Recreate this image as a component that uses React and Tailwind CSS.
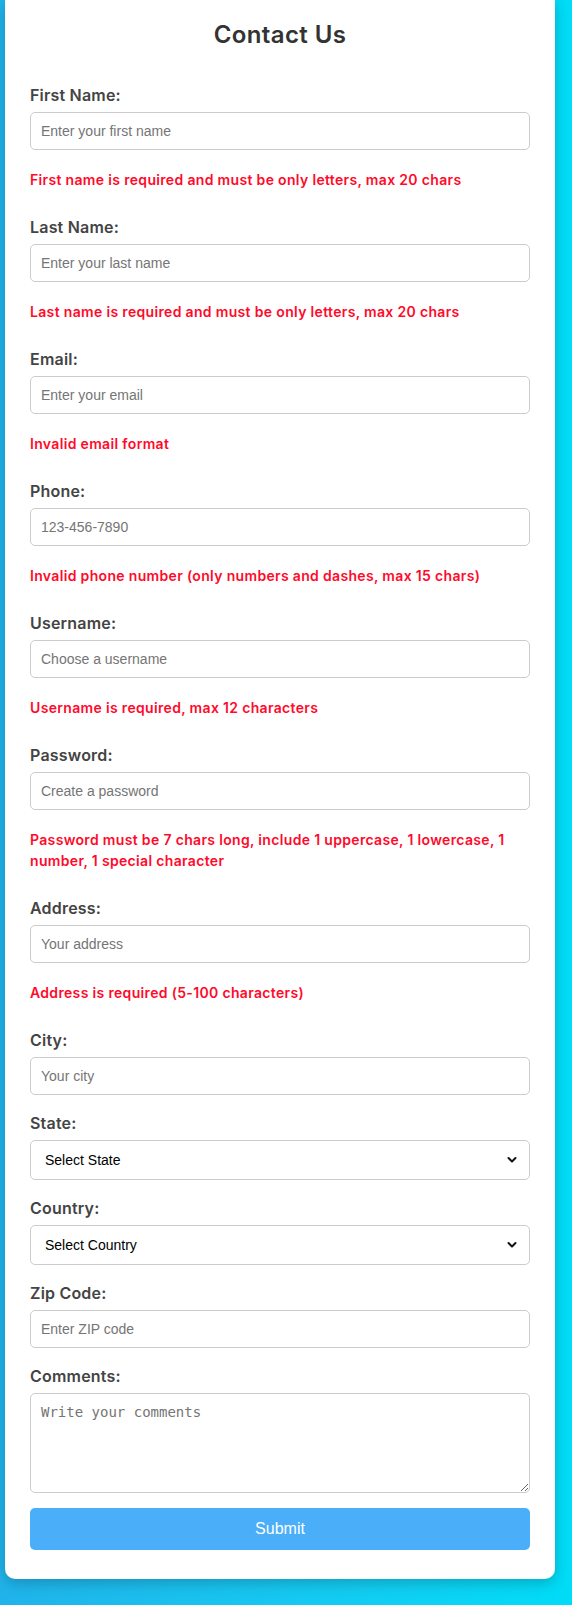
import { useState } from 'react'

const fields = [
  { id: 'firstName', label: 'First Name:', placeholder: 'Enter your first name', error: 'First name is required and must be only letters, max 20 chars' },
  { id: 'lastName', label: 'Last Name:', placeholder: 'Enter your last name', error: 'Last name is required and must be only letters, max 20 chars' },
  { id: 'email', label: 'Email:', placeholder: 'Enter your email', error: 'Invalid email format' },
  { id: 'phone', label: 'Phone:', placeholder: '123-456-7890', error: 'Invalid phone number (only numbers and dashes, max 15 chars)' },
  { id: 'username', label: 'Username:', placeholder: 'Choose a username', error: 'Username is required, max 12 characters' },
  { id: 'password', label: 'Password:', placeholder: 'Create a password', type: 'password', error: 'Password must be 7 chars long, include 1 uppercase, 1 lowercase, 1 number, 1 special character' },
  { id: 'address', label: 'Address:', placeholder: 'Your address', error: 'Address is required (5-100 characters)' },
  { id: 'city', label: 'City:', placeholder: 'Your city' },
]

const labelCls = "block text-[16px] leading-[24px] font-semibold tracking-[0.2px] text-[#444] mb-[5px] font-['Inter',sans-serif]"
const inputCls = "block w-full h-[38px] px-[10px] border border-[#ccc] rounded-[5px] bg-white text-[14px] text-black font-['Liberation_Sans',Arial,sans-serif] placeholder:text-[#757575] outline-none"

function Chevron() {
  return (
    <svg className="absolute right-[13px] top-1/2 -translate-y-1/2 pointer-events-none" width="10" height="7" viewBox="0 0 10 7">
      <polyline points="1.5,1.5 5,5 8.5,1.5" fill="none" stroke="#111" strokeWidth="2" strokeLinecap="round" strokeLinejoin="round" />
    </svg>
  )
}

function SelectField({ id, label, text }) {
  return (
    <div className="mb-[16px]">
      <label htmlFor={id} className={labelCls}>{label}</label>
      <div className="relative">
        <select id={id} defaultValue="" className="block w-full h-[40px] pl-[14px] pr-[30px] border border-[#ccc] rounded-[5px] bg-white text-[14px] text-black appearance-none font-['Liberation_Sans',Arial,sans-serif] outline-none">
          <option value="">{text}</option>
        </select>
        <Chevron />
      </div>
    </div>
  )
}

export default function App() {
  const [values, setValues] = useState({})

  const update = (id) => (e) => setValues({ ...values, [id]: e.target.value })

  return (
    <div className="min-h-[1605px] bg-linear-to-r from-[#20b3ea] to-[#00dcf7] pl-[5px] pb-[26px]">
      <div className="w-[550px] bg-white rounded-b-[10px] shadow-[0_4px_14px_rgba(0,0,0,0.22)] px-[25px] pt-[19px] pb-[29px]">
        <h1 className="text-center text-[24px] leading-[32px] font-semibold tracking-[0.4px] text-[#333] mb-[32px] font-['Inter',sans-serif]">
          Contact Us
        </h1>

        <form onSubmit={(e) => e.preventDefault()}>
          {fields.map(f => (
            <div key={f.id} className="mb-[16px]">
              <label htmlFor={f.id} className={labelCls}>{f.label}</label>
              <input
                id={f.id}
                type={f.type || 'text'}
                placeholder={f.placeholder}
                value={values[f.id] || ''}
                onChange={update(f.id)}
                className={inputCls}
              />
              {f.error && (
                <p className="mt-[19px] mb-[25px] text-[14px] leading-[21px] font-semibold tracking-[0.33px] text-[#ff0a2a] font-['Inter',sans-serif]">
                  {f.error}
                </p>
              )}
            </div>
          ))}

          <SelectField id="state" label="State:" text="Select State" />
          <SelectField id="country" label="Country:" text="Select Country" />

          <div className="mb-[16px]">
            <label htmlFor="zip" className={labelCls}>Zip Code:</label>
            <input id="zip" type="text" placeholder="Enter ZIP code" className={inputCls} />
          </div>

          <div>
            <label htmlFor="comments" className={labelCls}>Comments:</label>
            <textarea
              id="comments"
              placeholder="Write your comments"
              className="block w-full h-[100px] p-[10px] border border-[#ccc] rounded-[5px] bg-white text-[14px] leading-[17px] font-['DejaVu_Sans_Mono',monospace] placeholder:text-[#757575] outline-none"
            />
          </div>

          <button type="submit" className="mt-[15px] block w-full h-[42px] rounded-[5px] bg-[#4aaef9] text-white text-[16px] font-['Liberation_Sans',Arial,sans-serif]">
            Submit
          </button>
        </form>
      </div>
    </div>
  )
}
